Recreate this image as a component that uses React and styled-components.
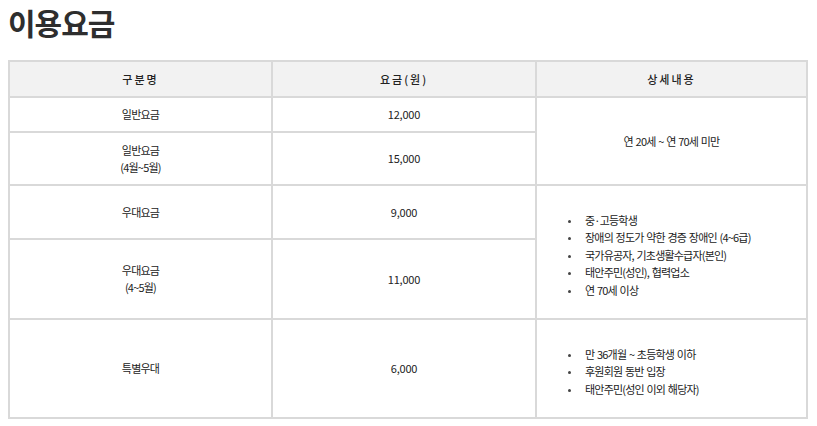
import React from 'react';
import styled, { createGlobalStyle } from 'styled-components';

const GlobalStyle = createGlobalStyle`
  html, body {
    margin: 0;
    padding: 0;
    background: #fff;
  }
  body {
    font-family: "Noto Sans CJK KR", "Noto Sans", sans-serif;
    color: #333;
  }
`;

const rows = [
  { name: ['일반요금'], price: '12,000', height: 35 },
  { name: ['일반요금', '(4월~5월)'], price: '15,000', height: 53 },
  { name: ['우대요금'], price: '9,000', height: 54 },
  { name: ['우대요금', '(4~5월)'], price: '11,000', height: 80 },
  { name: ['특별우대'], price: '6,000', height: 99 },
];

const discountList = [
  '중·고등학생',
  '장애의 정도가 약한 경증 장애인 (4~6급)',
  '국가유공자, 기초생활수급자(본인)',
  '태안주민(성인), 협력업소',
  '연 70세 이상',
];

const specialList = [
  '만 36개월 ~ 초등학생 이하',
  '후원회원 동반 입장',
  '태안주민(성인 이외 해당자)',
];

function App() {
  return (
    <Page>
      <GlobalStyle />
      <Title>이용요금</Title>
      <Table>
        <colgroup>
          <col style={{ width: 263 }} />
          <col style={{ width: 264 }} />
          <col />
        </colgroup>
        <thead>
          <Row $h={36}>
            <Head>구분명</Head>
            <Head>요금(원)</Head>
            <Head>상세내용</Head>
          </Row>
        </thead>
        <tbody>
          {rows.map((r, i) => (
            <Row key={i} $h={r.height}>
              <Cell>
                {r.name.map((n, j) => (
                  <Line key={j}>{n}</Line>
                ))}
              </Cell>
              <Cell $num>{r.price}</Cell>
              {i === 0 && <Cell rowSpan={2}>연 20세 ~ 연 70세 미만</Cell>}
              {i === 2 && (
                <ListCell rowSpan={2}>
                  <Bullets>
                    {discountList.map((t) => (
                      <li key={t}>{t}</li>
                    ))}
                  </Bullets>
                </ListCell>
              )}
              {i === 4 && (
                <ListCell>
                  <Bullets>
                    {specialList.map((t) => (
                      <li key={t}>{t}</li>
                    ))}
                  </Bullets>
                </ListCell>
              )}
            </Row>
          ))}
        </tbody>
      </Table>
    </Page>
  );
}

const Page = styled.div`
  padding: 0 8px;
  width: 800px;
`;

const Title = styled.h2`
  margin: 5px 0 0;
  height: 55px;
  font-size: 30px;
  line-height: 34px;
  font-weight: 700;
  letter-spacing: -1px;
  color: #2e2e2e;
`;

const Table = styled.table`
  width: 800px;
  border-collapse: collapse;
  table-layout: fixed;
  border: 2px solid #d9d9d9;
  font-size: 11px;
  letter-spacing: -0.8px;
  word-spacing: 1px;
  color: #222;
`;

const Row = styled.tr`
  height: ${(p) => p.$h}px;
`;

const Head = styled.th`
  background: #f2f2f2;
  border: 2px solid #d9d9d9;
  font-size: 11px;
  font-weight: 500;
  letter-spacing: 2px;
  word-spacing: 0;
  text-align: center;
  vertical-align: middle;
  padding: 0;
`;

const Cell = styled.td`
  border: 2px solid #d9d9d9;
  text-align: center;
  vertical-align: middle;
  padding: 0;
  line-height: 17px;
  letter-spacing: ${(p) => (p.$num ? '-0.2px' : 'inherit')};
`;

const Line = styled.div``;

const ListCell = styled(Cell)`
  text-align: left;
`;

const Bullets = styled.ul`
  list-style: none;
  margin: 0;
  padding: 7px 0 0 48px;
  li {
    position: relative;
    line-height: 17.5px;
  }
  li::before {
    content: '';
    position: absolute;
    left: -17px;
    top: 8px;
    width: 3px;
    height: 3px;
    border-radius: 50%;
    background: #444;
  }
`;

export default App;
